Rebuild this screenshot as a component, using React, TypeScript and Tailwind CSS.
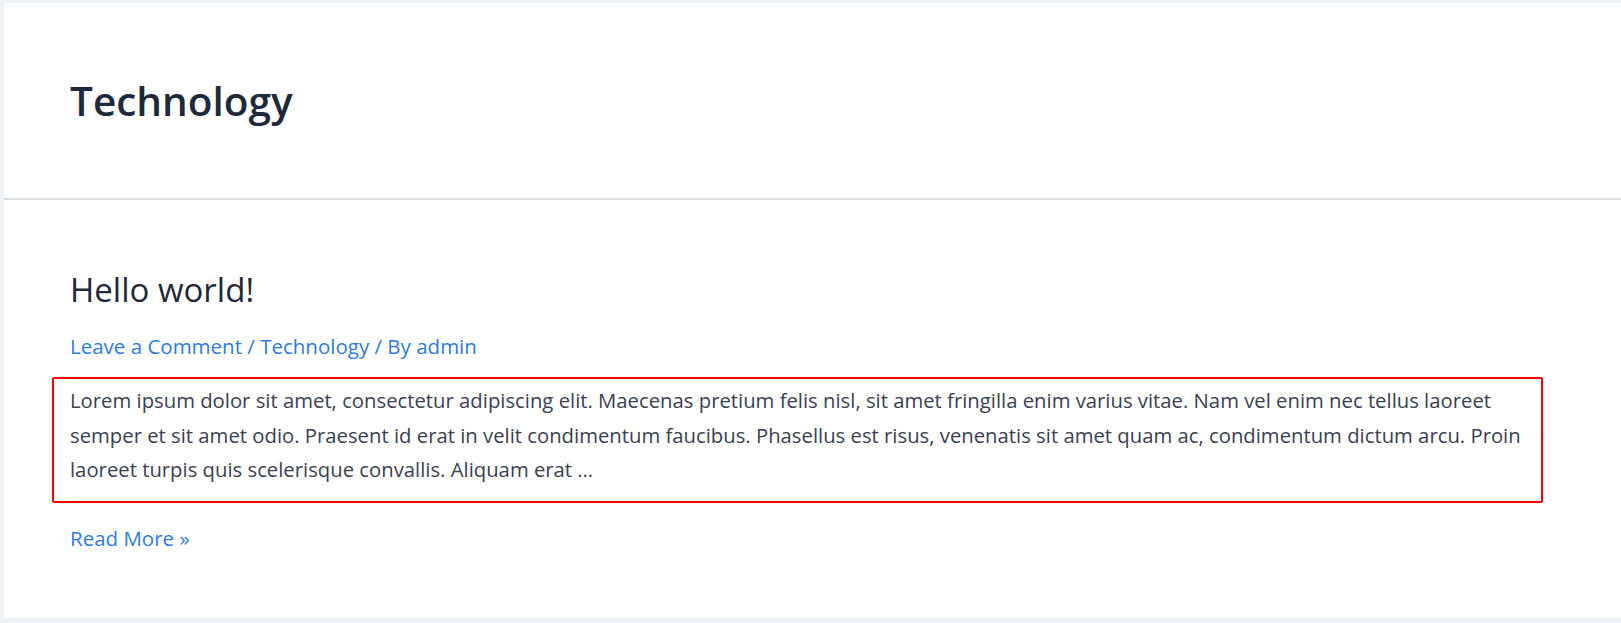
import React from 'react';

const font = { fontFamily: '"Open Sans", "Noto Sans", sans-serif' };

export default function App() {
  return (
    <div className="min-h-[623px] bg-[#eef3f8] pt-[3px] pl-[4px] pb-[5px]" style={font}>
      {/* Archive header */}
      <header className="bg-white h-[197px] border-b-2 border-[#d8dde3] pl-[66px] pt-[70px]">
        <h1 className="text-[40.5px] leading-[56px] font-semibold text-[#1e293b]">Technology</h1>
      </header>

      {/* Post */}
      <main className="bg-white h-[418px] pl-[48px] pr-[78px] pt-[68px]">
        <article className="pl-[18px]">
          <h2 className="text-[33px] leading-[44px] font-normal text-[#1e293b]">Hello world!</h2>
          <div className="mt-[20px] text-[20.5px] leading-[28px] text-[#2f7bdc]">
            <a href="#">Leave a Comment</a> / <a href="#">Technology</a> / By <a href="#">admin</a>
          </div>
        </article>
        <div className="mt-[17px] border-2 border-[#ff0000] rounded-[2px] pl-[16px] pr-[6px] pt-[4px] pb-[14px]">
          <p className="text-[20.3px] leading-[34.5px] text-[#3a4151]">
            Lorem ipsum dolor sit amet, consectetur adipiscing elit. Maecenas pretium felis nisl, sit amet fringilla enim varius vitae. Nam vel enim nec tellus laoreet semper et sit amet odio. Praesent id erat in velit condimentum faucibus. Phasellus est risus, venenatis sit amet quam ac, condimentum dictum arcu. Proin laoreet turpis quis scelerisque convallis. Aliquam erat …
          </p>
        </div>
        <div className="pl-[18px] mt-[21px] text-[20.5px] leading-[28px] text-[#2f7bdc]">
          <a href="#">Read More »</a>
        </div>
      </main>
    </div>
  );
}
